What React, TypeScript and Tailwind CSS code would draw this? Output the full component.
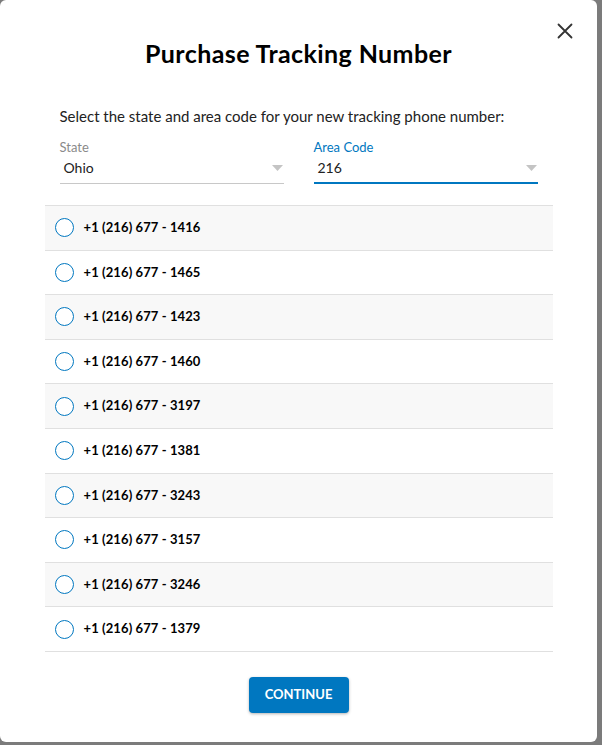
const numbers = [
  "+1 (216) 677 - 1416",
  "+1 (216) 677 - 1465",
  "+1 (216) 677 - 1423",
  "+1 (216) 677 - 1460",
  "+1 (216) 677 - 3197",
  "+1 (216) 677 - 1381",
  "+1 (216) 677 - 3243",
  "+1 (216) 677 - 3157",
  "+1 (216) 677 - 3246",
  "+1 (216) 677 - 1379",
]

function Caret() {
  return (
    <svg width="11" height="6" viewBox="0 0 11 6" className="shrink-0">
      <path d="M0 0 L11 0 L5.5 6 Z" fill="#c4c4c4" />
    </svg>
  )
}

export default function App() {
  return (
    <div
      className="w-[602px] h-[745px] bg-[#7b7b7b] overflow-hidden"
      style={{ fontFamily: "Lato, 'Open Sans', sans-serif" }}
    >
      <div className="relative w-[597px] h-[742px] bg-white rounded-md flex flex-col items-center">
        <button className="absolute left-[557px] top-[23px]">
          <svg width="16" height="16" viewBox="0 0 16 16">
            <path d="M1.5 1.5 L14.5 14.5 M14.5 1.5 L1.5 14.5" stroke="#333" strokeWidth="1.8" strokeLinecap="round" />
          </svg>
        </button>

        <h2 className="mt-[37px] text-[25px] leading-[32px] font-bold text-black tracking-[0.4px]">
          Purchase Tracking Number
        </h2>

        <div className="w-[478px] mt-[37px]">
          <p className="text-[15px] leading-[20px] text-[#222]">
            Select the state and area code for your new tracking phone number:
          </p>

          <div className="flex gap-[30px] mt-[13px]">
            <div className="flex-1">
              <div className="text-[13px] leading-[16px] text-[#8a8a8a]">State</div>
              <div className="h-[29px] pt-[4px] pl-[4px] pr-[1px] border-b border-[#c8c8c8]">
                <div className="flex items-center justify-between h-[18px]">
                  <span className="text-[14px] leading-[18px] text-[#222]">Ohio</span>
                  <Caret />
                </div>
              </div>
            </div>
            <div className="flex-1">
              <div className="text-[13px] leading-[16px] text-[#0077c0]">Area Code</div>
              <div className="h-[29px] pt-[4px] pl-[4px] pr-[1px] border-b-2 border-[#0077c0]">
                <div className="flex items-center justify-between h-[18px]">
                  <span className="text-[14px] leading-[18px] text-[#222]">216</span>
                  <Caret />
                </div>
              </div>
            </div>
          </div>
        </div>

        <div className="w-[508px] mt-[21px] border-t border-[#e0e0e0]">
          {numbers.map((n, i) => (
            <label
              key={n}
              className={`flex items-center h-[44.6px] px-[10px] gap-[10px] border-b border-[#e0e0e0] ${
                i % 2 === 0 ? "bg-[#f8f8f8]" : "bg-white"
              }`}
            >
              <span className="w-[19px] h-[19px] rounded-full border-[1.6px] border-[#0077c0] bg-white shrink-0" />
              <span className="text-[13px] font-bold text-black tracking-[0.1px]">{n}</span>
            </label>
          ))}
        </div>

        <button className="mt-[25px] w-[100px] h-[36px] rounded bg-[#0077c0] text-white text-[13px] font-bold shadow-[0_1px_3px_rgba(0,0,0,0.3)]">
          CONTINUE
        </button>
      </div>
    </div>
  )
}
